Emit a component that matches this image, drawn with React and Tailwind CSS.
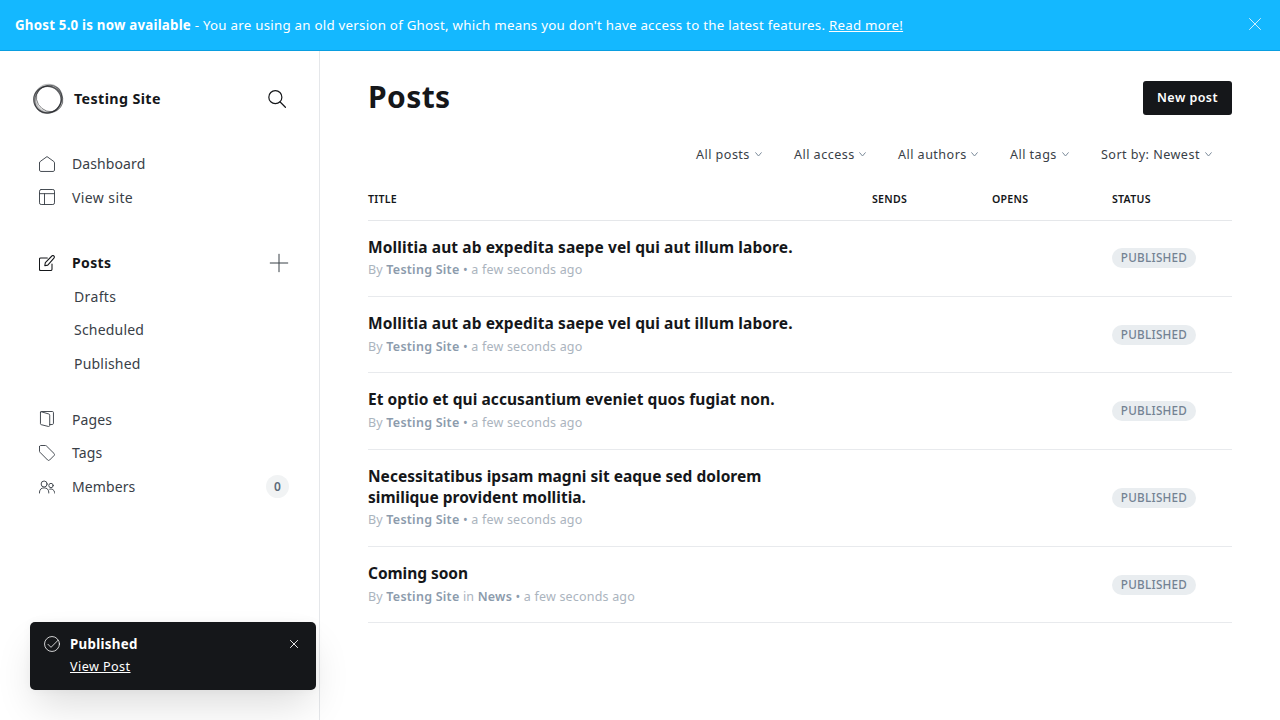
import React from 'react';

function Icon({ className, children, width = 1.3, box = '0 0 24 24' }) {
  return (
    <svg viewBox={box} className={className} fill="none" stroke="currentColor" strokeWidth={width} strokeLinecap="round" strokeLinejoin="round">
      {children}
    </svg>
  );
}

const icons = {
  home: <path d="M.75 10.5v10.7c0 1.1.9 2 2 2h18.5c1.1 0 2-.9 2-2V10.5a3 3 0 0 0-1.1-2.3L12 .9 1.9 8.2a3 3 0 0 0-1.15 2.3z" />,
  site: (
    <>
      <rect x=".75" y=".75" width="22.5" height="22.5" rx="2.5" />
      <path d="M.75 7h22.5M8.25 7v16.2" />
    </>
  ),
  posts: (
    <>
      <path d="M12.500 4.500H2.500a1.800 1.800 0 0 0-1.800 1.800v15.200a1.800 1.800 0 0 0 1.800 1.800h15.200a1.800 1.800 0 0 0 1.800-1.800V13.500" />
      <path d="M13.200 15.200l-4.500.8.8-4.600L19.300 1.500a2.200 2.200 0 0 1 3.100 0 2.200 2.200 0 0 1 0 3.200z" />
    </>
  ),
  pages: (
    <>
      <path d="M2.200 2v17c0 .8.4 1.300 1.100 1.500l10.800 2.700c1.100.3 2-.4 2-1.500V6.200c0-.8-.5-1.500-1.300-1.700L3 1" />
      <path d="M2.200 2.200C2.200 1.400 2.900.75 3.700.75h16.400c.9 0 1.600.7 1.600 1.600V18.500c0 1-.8 1.800-1.800 1.800h-3.800" />
    </>
  ),
  tags: <path d="M.75 2.500v6.800c0 .6.2 1.100.6 1.500l11.700 11.800c.8.8 2 .8 2.800 0l6.900-6.900c.8-.8.8-2 0-2.800L11 1.300A2 2 0 0 0 9.500.75h-7C1.500.75.75 1.500.75 2.500z" />,
  members: (
    <>
      <circle cx="7.700" cy="7.500" r="4.500" />
      <path d="M.75 21v-1.500a7 7 0 0 1 13.900 0V21" />
      <circle cx="18" cy="9.800" r="3.300" />
      <path d="M16 15.200a5.400 5.400 0 0 1 7.300 5V21" />
    </>
  ),
};

function NavItem({ icon, label, active, tracking = 'tracking-[0.1px]', children }) {
  return (
    <div className="flex h-[33.6px] items-center pr-[30px] pl-[39px]">
      <Icon width={active ? 1.6 : 1.4} className={active ? 'size-4 text-[#15171a]' : 'size-4 text-[#394047]'}>{icons[icon]}</Icon>
      <span className={active ? 'ml-[17px] flex-1 text-[14px] font-bold tracking-[0.35px] text-[#15171a]' : tracking + ' ml-[17px] flex-1 text-[14px] text-[#394047]'}>{label}</span>
      {children}
    </div>
  );
}

function Sidebar() {
  return (
    <aside className="w-[320px] shrink-0 border-r border-[#e5e7ea]">
      <div className="flex h-[96px] items-center pr-[33px] pl-[32px]">
        <svg viewBox="0 0 32 32" className="size-8" fill="none" stroke="#25272b">
          <ellipse cx="15.400" cy="16.600" rx="13.700" ry="13.200" strokeWidth="1.300" opacity=".75" />
          <ellipse cx="17.200" cy="14.900" rx="13.800" ry="12.300" strokeWidth=".9" opacity=".6" transform="rotate(38 16 16)" />
          <ellipse cx="16" cy="16.400" rx="14.600" ry="12.800" strokeWidth="1" opacity=".6" transform="rotate(-52 16 16)" />
          <ellipse cx="16.600" cy="15.600" rx="13.500" ry="13.900" strokeWidth="2" opacity=".3" />
        </svg>
        <span className="ml-[10px] flex-1 text-[14.300px] font-bold tracking-[0.370px] text-[#15171a]">Testing Site</span>
        <Icon className="size-[18px] text-[#15171a]" width={1.600}>
          <circle cx="9.800" cy="9.500" r="8.700" />
          <path d="M16.200 16l7 7" />
        </Icon>
      </div>
      <nav>
        <NavItem icon="home" label="Dashboard" />
        <NavItem icon="site" label="View site" tracking="tracking-[0.4px]" />
        <div className="h-[32px]" />
        <NavItem icon="posts" label="Posts" active>
          <Icon className="size-[20px] text-[#394047]" width={1.200}>
            <path d="M12 1.500v21M1.500 12h21" />
          </Icon>
        </NavItem>
        <div className="pl-[74px] text-[14px] tracking-[0.200px] text-[#394047]">
          <div className="flex h-[33.600px] items-center tracking-[0.350px]">Drafts</div>
          <div className="flex h-[33.600px] items-center pb-[1px]">Scheduled</div>
          <div className="flex h-[33.600px] items-center">Published</div>
        </div>
        <div className="h-[22px]" />
        <NavItem icon="pages" label="Pages" />
        <NavItem icon="tags" label="Tags" />
        <NavItem icon="members" label="Members">
          <span className="flex h-[23px] w-[23px] items-center justify-center rounded-full bg-[#f1f3f4] text-[12px] font-semibold text-[#5d6b7a]">0</span>
        </NavItem>
      </nav>
    </aside>
  );
}

function Filter({ label, width }) {
  return (
    <div className={width + ' flex items-center justify-between'}>
      <span className="whitespace-nowrap">{label}</span>
      <Icon className="h-[5px] w-[7px] text-[#7c8b9a]" width={1} box="0 0 7 5">
        <path d="M.7.7l2.800 3.300L6.300.7" />
      </Icon>
    </div>
  );
}

const posts = [
  { title: ['Mollitia aut ab expedita saepe vel qui aut illum labore.'], tracking: 'tracking-[0.1px]', height: 'h-[76px]', badge: 'pb-[1px]', meta: 'leading-[23px]' },
  { title: ['Mollitia aut ab expedita saepe vel qui aut illum labore.'], tracking: 'tracking-[0.1px]', height: 'h-[76px]', meta: 'leading-[25px]' },
  { title: ['Et optio et qui accusantium eveniet quos fugiat non.'], tracking: 'tracking-[0.06px]', height: 'h-[77px]', meta: 'leading-[25px]' },
  { title: ['Necessitatibus ipsam magni sit eaque sed dolorem', 'similique provident mollitia.'], tracking: 'tracking-[0.02px]', height: 'h-[97px]', meta: 'leading-[23px]' },
  { title: ['Coming soon'], tag: 'News', tracking: 'tracking-[-0.05px]', height: 'h-[76px]', meta: 'leading-[25px]' },
];

function PostRow({ post }) {
  return (
    <div className={post.height + ' flex border-b border-[#e8eaed]'}>
      <div className="w-[744px] pt-[16px]">
        <h3 className={post.tracking + ' text-[15.500px] leading-[21px] font-bold text-[#15171a]'}>
          {post.title.map((line) => (
            <span key={line} className="block whitespace-nowrap">{line}</span>
          ))}
        </h3>
        <p className={post.meta + ' text-[12.500px] tracking-[0.190px] text-[#abb4be]'}>
          By <span className="font-semibold tracking-[0.25px] text-[#8c9bac]">Testing Site</span>
          {post.tag && (
            <>
              {' in '}
              <span className="font-semibold text-[#8c9bac]">{post.tag}</span>
            </>
          )}{' '}
          <span className="text-[#8c9bac]">•</span> a few seconds ago
        </p>
      </div>
      <div className={(post.badge || '') + ' flex items-center'}>
        <span className="flex h-[20px] w-[84px] items-center justify-center rounded-full bg-[#e9edf0] text-[11.700px] font-medium tracking-[0.250px] text-[#738293]">PUBLISHED</span>
      </div>
    </div>
  );
}

function Toast() {
  return (
    <div className="absolute top-[622px] left-[30px] flex h-[68px] w-[286px] rounded-[5px] bg-[#15171a] pt-[11px] pl-[14px] text-white shadow-[0_20px_40px_-6px_rgba(0,0,0,0.14),0_0_10px_rgba(0,0,0,0.04)]">
      <Icon className="mt-[3px] size-4" width={1.200}>
        <circle cx="12" cy="12" r="11.200" />
        <path d="M6 12.500l4.500 4.500L21 6.500" />
      </Icon>
      <div className="ml-[10px] flex-1">
        <div className="text-[13.300px] leading-[22px] font-bold tracking-[0.300px]">Published</div>
        <div className="pt-[1px] text-[12.600px] leading-[22px] tracking-[0.430px] underline underline-offset-1">View Post</div>
      </div>
      <Icon className="mt-[7px] mr-[18px] size-[8px]" width={0.900} box="0 0 8 8">
        <path d="M.4.4l7.200 7.200M7.600.4L.4 7.600" />
      </Icon>
    </div>
  );
}

export default function App() {
  return (
    <div className="relative flex h-[720px] w-[1280px] flex-col overflow-hidden bg-white font-['Noto_Sans',sans-serif]">
      <header className="flex h-[51px] shrink-0 items-center justify-between border-b border-[#0a9ee0] bg-[#14b8ff] pr-[19px] pl-[15px] text-white">
        <p className="pt-[1px] text-[13.300px] tracking-[0.252px] whitespace-nowrap">
          <b className="font-bold tracking-[0.22px]">Ghost 5.0 is now available</b> - You are using an old version of Ghost, which means you don't have access to the latest features.{' '}
          <span className="underline underline-offset-1">Read more!</span>
        </p>
        <Icon className="mb-[2px] size-[12px]" width={0.800} box="0 0 12 12">
          <path d="M.5.5l11 11M11.500.5l-11 11" />
        </Icon>
      </header>
      <div className="flex min-h-0 flex-1">
        <Sidebar />
        <main className="w-[912px] pl-[48px]">
          <div className="flex h-[93px] items-center justify-between">
            <h1 className="pb-[2px] text-[30px] font-bold tracking-[0.400px] text-[#15171a]">Posts</h1>
            <button className="mt-[1px] h-[34px] w-[89px] rounded-[3px] bg-[#15171a] pt-[1px] text-[12.500px] font-semibold tracking-[0.450px] text-white">New post</button>
          </div>
          <div className="flex h-[22px] items-center justify-end gap-[32px] pr-[20px] text-[12.600px] tracking-[0.450px] text-[#394047]">
            <Filter label="All posts" width="w-[66px]" />
            <Filter label="All access" width="w-[72px]" />
            <Filter label="All authors" width="w-[80px]" />
            <Filter label="All tags" width="w-[59px]" />
            <Filter label="Sort by: Newest" width="w-[111px]" />
          </div>
          <div className="mt-[12px] flex h-[43px] items-center border-b border-[#e5e7ea] pt-[1px] text-[10.600px] font-semibold tracking-[0.250px] text-[#15171a]">
            <span className="w-[504px]">TITLE</span>
            <span className="w-[120px]">SENDS</span>
            <span className="w-[120px]">OPENS</span>
            <span>STATUS</span>
          </div>
          {posts.map((post, i) => (
            <PostRow key={i} post={post} />
          ))}
        </main>
      </div>
      <Toast />
    </div>
  );
}
